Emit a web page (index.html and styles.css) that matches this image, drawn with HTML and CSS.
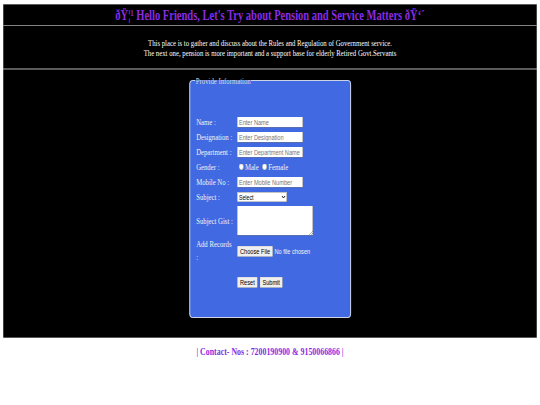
FILE: index.html
```html
<!DOCTYPE html>
<html lang="en">
<head>
<meta charset="utf-8">
<title>Pension and Service Matters</title>
<link rel="stylesheet" href="styles.css">
</head>
<body>
<div class="frame">
<div class="page">
  <header class="banner">
    <h1 class="title">ðŸ¦¹ Hello Friends, Let's Try about Pension and Service Matters ðŸ‘´</h1>
  </header>
  <section class="intro">
    <p>This place is to gather and discuss about the Rules and Regulation of Government service.<br>The next one, pension is more important and a support base for elderly Retired Govt.Servants</p>
  </section>
  <main class="form-area">
    <form class="info-form">
      <fieldset class="info">
        <legend class="info-legend">Provide Information</legend>
        <table class="fields">
          <tr><td class="lbl">Name :</td><td class="ctl"><input class="txt" type="text" placeholder="Enter Name"></td></tr>
          <tr><td class="lbl">Designation :</td><td class="ctl"><input class="txt" type="text" placeholder="Enter Designation"></td></tr>
          <tr><td class="lbl">Department :</td><td class="ctl"><input class="txt" type="text" placeholder="Enter Department Name"></td></tr>
          <tr><td class="lbl">Gender :</td><td class="ctl"><label class="opt"><input class="radio" type="radio" name="gender">Male</label> <label class="opt"><input class="radio" type="radio" name="gender">Female</label></td></tr>
          <tr><td class="lbl">Mobile No :</td><td class="ctl"><input class="txt" type="text" placeholder="Enter Mobile Number"></td></tr>
          <tr><td class="lbl">Subject :</td><td class="ctl"><select class="sel"><option>Select</option><option>Pension</option><option>Service</option></select></td></tr>
          <tr><td class="lbl">Subject Gist :</td><td class="ctl"><textarea class="gist"></textarea></td></tr>
          <tr><td class="lbl">Add Records :</td><td class="ctl"><input class="file" type="file"></td></tr>
          <tr class="actions"><td class="lbl"></td><td class="ctl"><input class="btn" type="reset" value="Reset"> <input class="btn" type="submit" value="Submit"></td></tr>
        </table>
      </fieldset>
    </form>
  </main>
  <footer class="contact">| Contact- Nos : 7200190900 &amp; 9150066866 |</footer>
</div>
</div>
</body>
</html>
```

FILE: styles.css
```css
html {
  overflow: hidden;
  background: #ffffff;
}

body {
  margin: 0;
  font-family: "Liberation Serif", "Times New Roman", serif;
}

.frame {
  width: 540px;
  height: 405px;
  overflow: hidden;
}

/* the reference is a 1440x810 page squeezed into 540x405 */
.page {
  width: 1440px;
  box-sizing: border-box;
  padding: 8px;
  transform: scale(0.375, 0.5);
  transform-origin: 0 0;
}

.banner {
  background: #000000;
  border: 1px solid #b8b8b8;
  padding: 4.5px 0;
}

.title {
  margin: 0;
  font-size: 28px;
  line-height: 32px;
  font-weight: 700;
  color: #8a2be2;
  text-align: center;
}

.intro {
  background: #000000;
  border: 1px solid #b8b8b8;
  padding: 23px 0 19.5px;
  color: #ffffff;
  font-size: 18px;
  line-height: 21px;
  text-align: center;
}

.intro p {
  margin: 0;
}

.form-area {
  display: block;
  background: #000000;
  border: 1px solid #b0b0b0;
  padding: 12.7px 0 38.4px;
}

.info-form {
  margin: 0;
}

.info {
  box-sizing: border-box;
  width: 431px;
  margin: 0 auto;
  padding: 0 13.5px;
  border: 2px solid #e2e2e2;
  border-radius: 8px;
  background: #4169e1;
  min-width: 0;
}

.info-legend {
  padding: 0 2px;
  font-size: 18px;
  line-height: 20px;
  color: #dcdcdc;
}

.fields {
  border-spacing: 2px;
  margin: 56.4px 0 55.4px;
  font-size: 18px;
  color: #f4f4f4;
}

.fields td {
  padding: 1px;
  line-height: 26px;
  vertical-align: middle;
  text-align: left;
}

.fields .lbl {
  width: 100px;
  padding-right: 6px;
}

.actions td {
  padding-top: 20px;
}

.txt {
  display: block;
  box-sizing: border-box;
  width: 176px;
  height: 22px;
  margin: 0;
  padding: 1px 3px;
  font-family: "Liberation Sans", Arial, sans-serif;
  font-size: 15px;
}

.sel {
  display: block;
  box-sizing: border-box;
  width: 133px;
  height: 20px;
  margin: 0;
  font-family: "Liberation Sans", Arial, sans-serif;
  font-size: 14px;
}

.gist {
  display: block;
  box-sizing: border-box;
  width: 203px;
  height: 60px;
  margin: 0;
}

.radio {
  margin: 3px 3px 0 5px;
}

.opt {
  white-space: nowrap;
}

.file {
  font-family: "Liberation Sans", Arial, sans-serif;
  font-size: 15px;
  color: #f4f4f4;
  vertical-align: middle;
}

.file::file-selector-button {
  color: #000000;
}

.btn {
  font-family: "Liberation Sans", Arial, sans-serif;
  font-size: 15px;
  vertical-align: middle;
}

.contact {
  padding-top: 14.6px;
  font-size: 21px;
  line-height: 24px;
  font-weight: 700;
  color: #8a2be2;
  text-align: center;
}
```
